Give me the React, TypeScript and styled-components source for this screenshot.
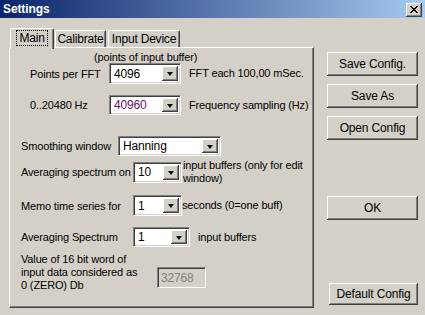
import * as React from 'react';
import styled, { createGlobalStyle } from 'styled-components';

const Global = createGlobalStyle`
  html, body {
    margin: 0;
    padding: 0;
    background: #d4d0c8;
  }
  body {
    font-family: "Liberation Sans", Arial, sans-serif;
    font-size: 11px;
    letter-spacing: -0.15px;
    color: #000;
  }
`;

const Window = styled.div`
  width: 425px;
  height: 315px;
  background: #d4d0c8;
  overflow: hidden;
`;

const TitleBar = styled.div`
  height: 18px;
  display: flex;
  align-items: center;
  justify-content: space-between;
  padding: 0 3px 0 3px;
  background: linear-gradient(to right, #0a246a, #a6caf0);
`;

const Title = styled.div`
  color: #fff;
  font-weight: bold;
  font-size: 12px;
  letter-spacing: -0.1px;
`;

const CloseBox = styled.div`
  width: 16px;
  height: 14px;
  margin-top: 1px;
  box-sizing: border-box;
  background: #d4d0c8;
  display: flex;
  align-items: center;
  justify-content: center;
  box-shadow: inset -1px -1px #404040, inset 1px 1px #fff, inset -2px -2px #808080;
`;

const Body = styled.div`
  display: flex;
`;

const LeftSide = styled.div`
  padding: 10px 0 0 9px;
`;

const TabStrip = styled.div`
  display: flex;
  align-items: flex-end;
  height: 19px;
  padding-left: 1px;
  position: relative;
  z-index: 1;
`;

const Tab = styled.div<{ $active?: boolean; $w: number }>`
  box-sizing: border-box;
  width: ${p => p.$w}px;
  height: ${p => (p.$active ? 21 : 17)}px;
  margin-bottom: ${p => (p.$active ? -2 : 0)}px;
  margin-right: ${p => (p.$active ? 1 : 2)}px;
  background: #d4d0c8;
  border-top: 1px solid #fff;
  border-left: 1px solid #fff;
  border-right: 1px solid #404040;
  border-radius: 2px 2px 0 0;
  box-shadow: inset -1px 0 #808080;
  display: flex;
  justify-content: center;
  padding-top: ${p => (p.$active ? 2 : 1)}px;
  font-size: 12px;
  line-height: 14px;
  letter-spacing: -0.2px;
`;

const Focus = styled.span`
  outline: 1px dotted #000;
  padding: 0 2px;
  height: 14px;
`;

const Panel = styled.div`
  box-sizing: border-box;
  width: 305px;
  height: 261px;
  border-top: 1px solid #fff;
  border-left: 1px solid #fff;
  border-right: 1px solid #404040;
  border-bottom: 1px solid #404040;
  box-shadow: inset -1px -1px #808080;
  display: flex;
  flex-direction: column;
`;

const Row = styled.div<{ $top: number; $left: number; $h: number }>`
  display: flex;
  align-items: center;
  margin-top: ${p => p.$top}px;
  padding-left: ${p => p.$left}px;
  height: ${p => p.$h}px;
`;

const Note = styled.div`
  padding-left: 84px;
  margin-top: 3px;
  line-height: 12px;
`;

const Label = styled.div<{ $w: number }>`
  width: ${p => p.$w}px;
  flex: none;
  white-space: nowrap;
`;

const After = styled.div<{ $gap: number }>`
  margin-left: ${p => p.$gap}px;
  line-height: 13px;
  white-space: nowrap;
`;

const ComboBox = styled.div<{ $w: number; $h: number }>`
  box-sizing: border-box;
  width: ${p => p.$w}px;
  height: ${p => p.$h}px;
  flex: none;
  background: #fff;
  border-top: 1px solid #808080;
  border-left: 1px solid #808080;
  border-right: 1px solid #fff;
  border-bottom: 1px solid #fff;
  box-shadow: inset 1px 1px #404040, inset -1px -1px #d4d0c8;
  display: flex;
  padding: 2px;
`;

const ComboText = styled.div<{ $color?: string }>`
  flex: 1;
  padding-left: 2px;
  display: flex;
  align-items: center;
  color: ${p => p.$color || '#000'};
  font-size: 12px;
`;

const DropBtn = styled.div`
  width: 16px;
  flex: none;
  background: #d4d0c8;
  box-shadow: inset -1px -1px #404040, inset 1px 1px #fff, inset -2px -2px #808080;
  display: flex;
  align-items: center;
  justify-content: center;
`;

const Arrow = styled.div`
  width: 0;
  height: 0;
  border-left: 3.5px solid transparent;
  border-right: 3.5px solid transparent;
  border-top: 4px solid #000;
  margin-top: 1px;
`;

const MultiLabel = styled.div`
  width: 136px;
  line-height: 13px;
`;

const ValueRow = styled.div`
  display: flex;
  align-items: flex-start;
  padding-left: 11px;
  margin-top: 6px;
`;

const Disabled = styled.div`
  box-sizing: border-box;
  width: 49px;
  height: 21px;
  margin-top: 14px;
  border-top: 1px solid #808080;
  border-left: 1px solid #808080;
  border-right: 1px solid #fff;
  border-bottom: 1px solid #fff;
  box-shadow: inset 1px 1px #404040, inset -1px -1px #d4d0c8;
  color: #808080;
  font-size: 12px;
  padding: 3px 0 0 3px;
`;

const RightSide = styled.div`
  display: flex;
  flex-direction: column;
  align-items: flex-end;
  padding-top: 34px;
  margin-left: 13px;
`;

const Button = styled.button<{ $top: number; $w?: number; $h?: number }>`
  box-sizing: border-box;
  width: ${p => p.$w || 91}px;
  height: ${p => p.$h || 24}px;
  margin-top: ${p => p.$top}px;
  background: #d4d0c8;
  border: none;
  padding: 0;
  font-family: "Liberation Sans", Arial, sans-serif;
  font-size: 12px;
  letter-spacing: -0.15px;
  color: #000;
  box-shadow: inset -1px -1px #404040, inset 1px 1px #fff, inset -2px -2px #808080;
`;

function Combo({ w, h, value, color }: { w: number; h: number; value: string; color?: string }) {
  return (
    <ComboBox $w={w} $h={h}>
      <ComboText $color={color}>{value}</ComboText>
      <DropBtn><Arrow /></DropBtn>
    </ComboBox>
  );
}

export default function App() {
  return (
    <Window>
      <Global />
      <TitleBar>
        <Title>Settings</Title>
        <CloseBox>
          <svg width="8" height="7" viewBox="0 0 8 7">
            <path d="M0 0 L7 7 M1 0 L8 7 M7 0 L0 7 M8 0 L1 7" stroke="#000" strokeWidth="1" />
          </svg>
        </CloseBox>
      </TitleBar>
      <Body>
        <LeftSide>
          <TabStrip>
            <Tab $active $w={44}><Focus>Main</Focus></Tab>
            <Tab $w={51}>Calibrate</Tab>
            <Tab $w={72}>Input Device</Tab>
          </TabStrip>
          <Panel>
            <Note>(points of input buffer)</Note>
            <Row $top={0} $left={20} $h={21}>
              <Label $w={79}>Points per FFT</Label>
              <Combo w={72} h={21} value="4096" />
              <After $gap={8}>FFT each 100,00 mSec.</After>
            </Row>
            <Row $top={11} $left={20} $h={20}>
              <Label $w={79}>0..20480 Hz</Label>
              <Combo w={72} h={20} value="40960" color="#6a1068" />
              <After $gap={8}>Frequency sampling (Hz)</After>
            </Row>
            <Row $top={21} $left={11} $h={20}>
              <Label $w={97}>Smoothing window</Label>
              <Combo w={103} h={20} value="Hanning" />
            </Row>
            <Row $top={6} $left={11} $h={20}>
              <Label $w={112}>Averaging spectrum on</Label>
              <Combo w={49} h={21} value="10" />
              <After $gap={1}>input buffers (only for edit<br />window)</After>
            </Row>
            <Row $top={13} $left={11} $h={21}>
              <Label $w={112}>Memo time series for</Label>
              <Combo w={49} h={21} value="1" />
              <After $gap={0}>seconds (0=one buff)</After>
            </Row>
            <Row $top={11} $left={11} $h={20}>
              <Label $w={112}>Averaging Spectrum</Label>
              <Combo w={57} h={20} value="1" />
              <After $gap={8}>input buffers</After>
            </Row>
            <ValueRow>
              <MultiLabel>Value of 16 bit word of<br />input data considered as<br />0 (ZERO) Db</MultiLabel>
              <Disabled>32768</Disabled>
            </ValueRow>
          </Panel>
        </LeftSide>
        <RightSide>
          <Button $top={0}>Save Config.</Button>
          <Button $top={8}>Save As</Button>
          <Button $top={8}>Open Config</Button>
          <Button $top={56}>OK</Button>
          <Button $top={63} $w={89} $h={22}>Default Config</Button>
        </RightSide>
      </Body>
    </Window>
  );
}
